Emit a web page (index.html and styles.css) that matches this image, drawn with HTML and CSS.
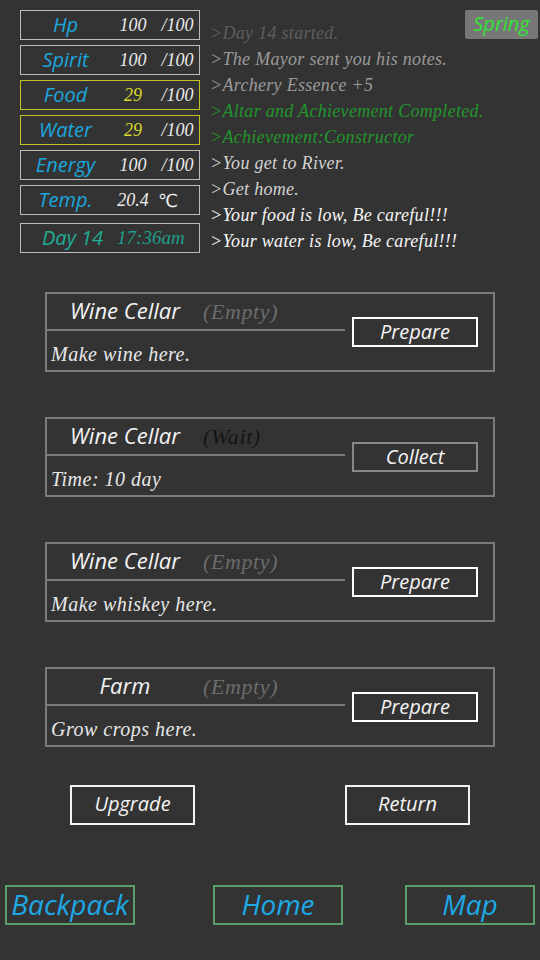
FILE: index.html
```html
<!DOCTYPE html>
<html>
<head>
<meta charset="utf-8">
<link rel="stylesheet" href="styles.css">
</head>
<body>
<div class="screen">
  <div class="top">
    <div class="stats">
      <div class="stat"><span class="lbl">Hp</span><span class="val">100</span><span class="max">/100</span></div>
      <div class="stat"><span class="lbl">Spirit</span><span class="val">100</span><span class="max">/100</span></div>
      <div class="stat warn"><span class="lbl">Food</span><span class="val low">29</span><span class="max">/100</span></div>
      <div class="stat warn"><span class="lbl">Water</span><span class="val low">29</span><span class="max">/100</span></div>
      <div class="stat"><span class="lbl">Energy</span><span class="val">100</span><span class="max">/100</span></div>
      <div class="stat"><span class="lbl">Temp.</span><span class="val">20.4</span><span class="unit">℃</span></div>
      <div class="stat day"><span class="daylbl">Day 14</span><span class="time">17:36am</span></div>
    </div>
    <div class="log">
      <div class="l dim">&gt;Day 14 started.</div>
      <div class="l grey">&gt;The Mayor sent you his notes.</div>
      <div class="l grey">&gt;Archery Essence +5</div>
      <div class="l green">&gt;Altar and Achievement Completed.</div>
      <div class="l green">&gt;Achievement:Constructor</div>
      <div class="l light">&gt;You get to River.</div>
      <div class="l light">&gt;Get home.</div>
      <div class="l white">&gt;Your food is low, Be careful!!!</div>
      <div class="l white">&gt;Your water is low, Be careful!!!</div>
    </div>
    <div class="season">Spring</div>
  </div>

  <div class="cards">
    <div class="card">
      <div class="card-main">
        <div class="card-head"><span class="title">Wine Cellar</span><span class="status">(Empty)</span></div>
        <div class="desc">Make wine here.</div>
      </div>
      <div class="btn">Prepare</div>
    </div>
    <div class="card">
      <div class="card-main">
        <div class="card-head"><span class="title">Wine Cellar</span><span class="status wait">(Wait)</span></div>
        <div class="desc">Time: 10 day</div>
      </div>
      <div class="btn muted">Collect</div>
    </div>
    <div class="card">
      <div class="card-main">
        <div class="card-head"><span class="title">Wine Cellar</span><span class="status">(Empty)</span></div>
        <div class="desc">Make whiskey here.</div>
      </div>
      <div class="btn">Prepare</div>
    </div>
    <div class="card">
      <div class="card-main">
        <div class="card-head"><span class="title">Farm</span><span class="status">(Empty)</span></div>
        <div class="desc">Grow crops here.</div>
      </div>
      <div class="btn">Prepare</div>
    </div>
  </div>

  <div class="actions">
    <div class="action upgrade">Upgrade</div>
    <div class="action ret">Return</div>
  </div>

  <div class="nav">
    <div class="navbtn backpack">Backpack</div>
    <div class="navbtn home">Home</div>
    <div class="navbtn map">Map</div>
  </div>
</div>
</body>
</html>
```

FILE: styles.css
```css
* { box-sizing: border-box; }
html, body { margin: 0; padding: 0; }
body {
  background: #333333;
  width: 540px;
  height: 960px;
  overflow: hidden;
  font-family: "Open Sans", "Liberation Sans", sans-serif;
}
.screen { position: relative; width: 540px; height: 960px; }

.top { display: flex; padding: 10px 0 0 20px; }
.stats { width: 180px; display: flex; flex-direction: column; gap: 5px; }
.stat {
  height: 30px;
  border: 1px solid #bdbdbd;
  display: flex;
  align-items: center;
}
.stat.warn { border-color: #c2c22a; }
.stat.day { margin-top: 3px; padding-left: 21px; gap: 14px; }
.lbl {
  width: 89px;
  text-align: center;
  font-style: italic;
  font-size: 20px;
  color: #1ba6de;
  padding-bottom: 2px;
}
.val, .max, .time {
  font-family: "Liberation Serif", serif;
  font-style: italic;
  font-size: 18px;
  color: #ececec;
}
.val { width: 46px; text-align: center; }
.val.low { color: #d8d82a; }
.max { flex: 1; text-align: center; }
.unit { flex: 1; padding-left: 2px; font-size: 18px; color: #f0f0f0; font-family: "DejaVu Sans", sans-serif; }
.daylbl { font-style: italic; font-size: 20px; color: #20ae96; padding-bottom: 2px; }
.time { color: #1f9e8c; font-size: 19px; }

.log { margin-left: 10px; margin-top: 10px; }
.l {
  height: 26px;
  line-height: 26px;
  font-family: "Liberation Serif", serif;
  font-style: italic;
  font-size: 18px;
  letter-spacing: 0.3px;
  white-space: nowrap;
}
.dim { color: #5e5e5e; }
.grey { color: #9a9a9a; }
.green { color: #22962b; }
.light { color: #d2d2d2; }
.white { color: #f6f6f6; }

.season {
  position: absolute;
  top: 10px;
  left: 465px;
  width: 73px;
  height: 29px;
  background: #777777;
  border-radius: 2px;
  color: #33e433;
  font-style: italic;
  font-size: 20px;
  line-height: 27px;
  text-align: center;
}

.cards {
  margin: 38px 0 0 45px;
  display: flex;
  flex-direction: column;
  gap: 45px;
}
.card {
  width: 450px;
  height: 80px;
  border: 2px solid #7a7a7a;
  display: flex;
  align-items: center;
}
.card-main {
  width: 298px;
  align-self: stretch;
  display: flex;
  flex-direction: column;
}
.card-head {
  height: 37px;
  border-bottom: 2px solid #7a7a7a;
  display: flex;
  align-items: center;
  padding-bottom: 4px;
}
.title {
  width: 156px;
  text-align: center;
  font-style: italic;
  font-size: 22px;
  color: #f4f4f4;
}
.status {
  font-family: "Liberation Serif", serif;
  font-style: italic;
  font-size: 22px;
  letter-spacing: 0.6px;
  color: #6c6c6c;
  padding-top: 4px;
}
.status.wait { color: #141414; }
.desc {
  flex: 1;
  display: flex;
  align-items: center;
  padding-left: 4px;
  padding-top: 7px;
  font-family: "Liberation Serif", serif;
  font-style: italic;
  font-size: 20px;
  letter-spacing: 0.5px;
  color: #e8e8e8;
}
.btn {
  margin-left: 7px;
  width: 126px;
  height: 30px;
  border: 2px solid #ffffff;
  display: flex;
  align-items: center;
  justify-content: center;
  font-style: italic;
  font-size: 20px;
  color: #f4f4f4;
  padding-bottom: 2px;
}
.btn.muted { border-color: #888888; }

.actions { display: flex; margin-top: 38px; padding-left: 70px; }
.action {
  width: 125px;
  height: 40px;
  border: 2px solid #f4f4f4;
  display: flex;
  align-items: center;
  justify-content: center;
  font-style: italic;
  font-size: 20px;
  color: #f4f4f4;
  padding-bottom: 3px;
}
.ret { margin-left: 150px; }

.nav { display: flex; margin-top: 60px; padding-left: 5px; }
.navbtn {
  width: 130px;
  height: 40px;
  border: 2px solid #5a9e6a;
  display: flex;
  align-items: center;
  justify-content: center;
  font-style: italic;
  font-size: 28px;
  color: #1ea8e6;
  padding-bottom: 3px;
}
.home { margin-left: 78px; }
.map { margin-left: 62px; }
```
